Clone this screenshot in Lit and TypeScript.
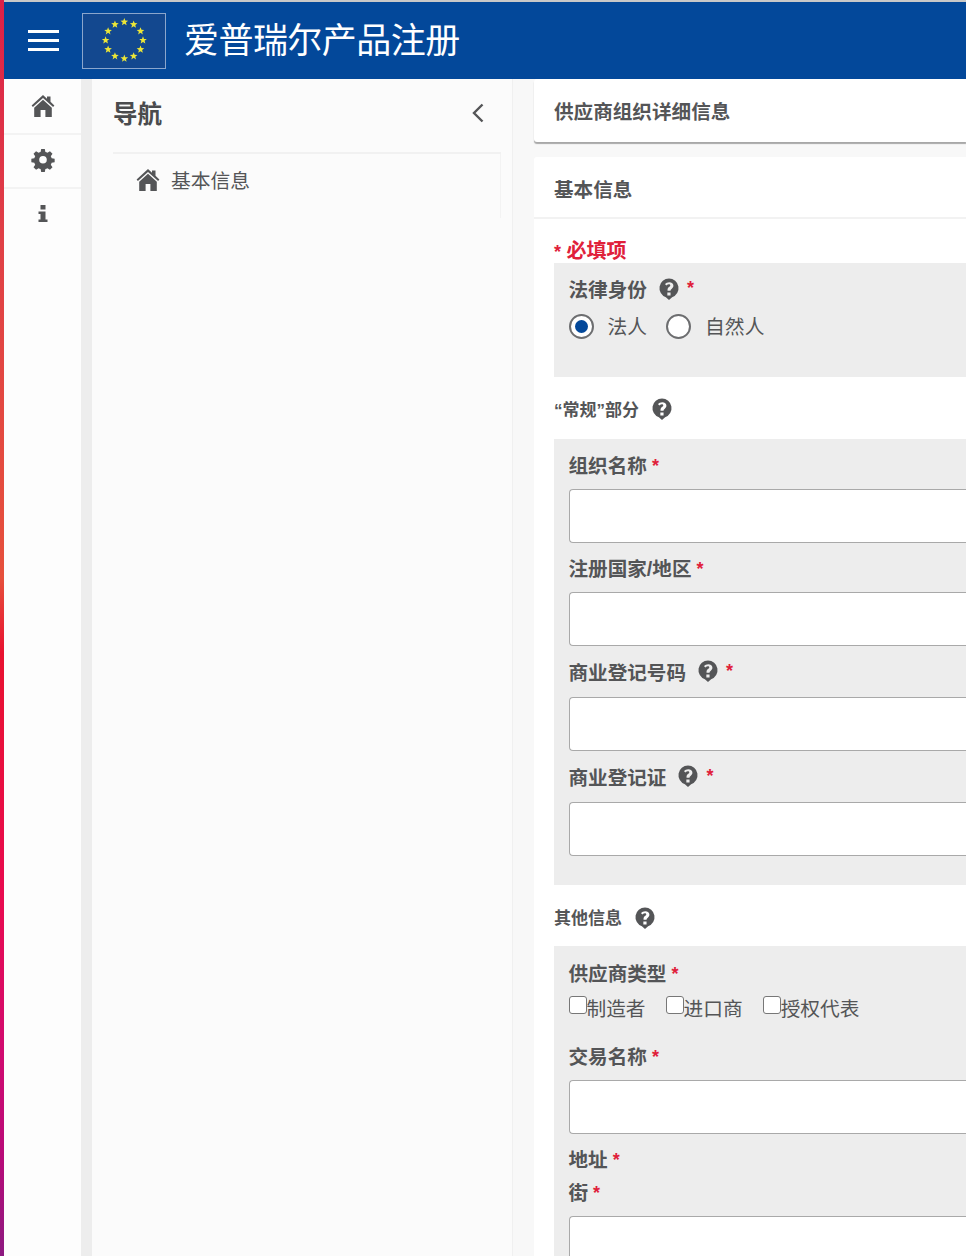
import { LitElement, html, css, svg } from "lit";
import { customElement } from "lit/decorators.js";

const HOME = "M12 1 L0.6 11.4 L1.9 13 L12 3.9 L22.1 13 L23.4 11.4 L19.5 7.8 V2.5 H16 V4.7 Z M12 5.8 L3.2 13.7 V23 H9.6 V16 H14.4 V23 H20.8 V13.7 Z";
const GEAR = "M10.2 1h3.6l.6 3a8 8 0 0 1 2 .85l2.55-1.7 2.55 2.55-1.7 2.55a8 8 0 0 1 .85 2l3 .6v3.3l-3 .6a8 8 0 0 1-.85 2l1.7 2.55-2.55 2.55-2.55-1.7a8 8 0 0 1-2 .85l-.6 3h-3.6l-.6-3a8 8 0 0 1-2-.85l-2.55 1.7-2.55-2.55 1.7-2.55a8 8 0 0 1-.85-2l-3-.6v-3.3l3-.6a8 8 0 0 1 .85-2l-1.7-2.55 2.55-2.55 2.55 1.7a8 8 0 0 1 2-.85ZM12 8a3.8 3.8 0 1 0 0 7.6A3.8 3.8 0 0 0 12 8Z";
const INFO = "M9.5 3h5v4.5h-5ZM7.5 9.5h7V17.5h2V20h-9V17.5h2V12h-2Z";

const homeIcon = () => html`<svg viewBox="0 0 24 24"><path d=${HOME} fill="#545557"></path></svg>`;
const help = html`<svg class="help" viewBox="0 0 24 24"><path fill="#545557" fill-rule="evenodd" d="M12 .5A10.5 10.5 0 0 0 8.6 20.9L12 24l3.4-3.1A10.5 10.5 0 0 0 12 .5Zm-1.8 15.2h3.5v3.3h-3.5Zm3.5-1.7h-3.3v-1.2c0-1.6.9-2.4 1.9-3.2.7-.5 1.1-.9 1.1-1.5 0-.7-.6-1.2-1.5-1.2-1 0-1.9.5-2.6 1.3L7.7 6.8C8.8 5.5 10.3 4.7 12.3 4.7c2.7 0 4.5 1.5 4.5 3.8 0 1.7-1 2.6-2 3.4-.8.6-1.100 1-1.100 1.700Z"></path></svg>`;

function stars() {
  const out = [];
  for (let i = 0; i < 12; i++) {
    const a = (i * Math.PI) / 6;
    const cx = 41.3 + 18.7 * Math.sin(a);
    const cy = 26.3 + 18.3 * -Math.cos(a);
    const pts: string[] = [];
    for (let k = 0; k < 10; k++) {
      const r = k % 2 ? 1.7 : 4;
      const t = (k * Math.PI) / 5;
      pts.push(`${(cx + r * Math.sin(t)).toFixed(2)},${(cy - r * Math.cos(t)).toFixed(2)}`);
    }
    out.push(svg`<polygon points=${pts.join(" ")} fill="#ece637"></polygon>`);
  }
  return out;
}

@customElement("app-root")
export class AppRoot extends LitElement {
  static styles = css`
    :host { display: block; width: 966px; height: 1256px; overflow: hidden; font-family: "Liberation Sans", "Noto Sans CJK SC", sans-serif; color: #545557; background: #fff; }
    .page { display: flex; height: 1256px; overflow: hidden; }
    .stripe { flex: 0 0 4px; background: linear-gradient(180deg, #dc2048 0%, #e04046 19%, #e6503c 46%, #e81230 52%, #e80a50 72%, #d00a70 84%, #b80a78 92%, #8c1a80 100%); }
    .main { flex: 0 0 962px; width: 962px; display: flex; flex-direction: column; min-width: 0; }
    .header { flex: 0 0 79px; box-sizing: border-box; height: 79px; background: #03489a; border-top: 2px solid #c8c8c8; display: flex; align-items: center; }
    .burger { width: 31px; margin-left: 24px; display: flex; flex-direction: column; gap: 6px; }
    .burger i { display: block; height: 3px; background: #fff; }
    .flag { margin-left: 23px; width: 84px; height: 56px; box-sizing: border-box; border: 1px solid #8ba6cc; background: #13488f; display: block; }
    .title { margin-left: 18px; color: #fff; font-size: 35px; line-height: 44px; letter-spacing: -.55px; white-space: nowrap; }
    .body { flex: 1; display: flex; min-height: 0; }
    .rail { flex: 0 0 77px; background: #fdfdfd; display: flex; flex-direction: column; }
    .rail-item { height: 54px; box-sizing: border-box; border-bottom: 2px solid #f3f3f3; display: flex; justify-content: center; align-items: center; padding-bottom: 2px; }
    .rail-item.first { height: 56px; padding-bottom: 0; }
    .rail-item.last { border: 0; padding-bottom: 4px; }
    .rail-item svg { width: 24px; height: 24px; display: block; }
    .gutter { flex: 0 0 11px; background: #ededed; }
    .nav { flex: 0 0 421px; box-sizing: border-box; background: #fbfbfb; padding: 0 11px 0 21px; border-right: 1px solid #f0f0f0; }
    .nav-head { height: 75px; box-sizing: border-box; padding-bottom: 5px; border-bottom: 2px solid #f1f1f1; display: flex; align-items: center; justify-content: space-between; }
    .nav-head h2 { margin: 0 0 2px; font-size: 24.5px; font-weight: 700; color: #4a4b4d; }
    .chev { width: 16px; height: 22px; margin-right: 15px; display: block; }
    .nav-item { height: 64px; box-sizing: border-box; border-right: 1px solid #f3f3f3; display: flex; align-items: center; padding: 0 0 13px 23px; gap: 11px; font-size: 19.8px; }
    .nav-item svg { width: 24px; height: 24px; }
    .content { flex: 1; min-width: 0; background: #f8f8f8; padding-left: 21px; }
    .panel-a { height: 63px; box-sizing: border-box; background: #fff; border-radius: 3px 0 0 3px; box-shadow: 0 2px 1px #a8a8a8; display: flex; align-items: center; padding: 0 0 0 20px; font-size: 19.6px; font-weight: 700; }
    .panel-b { background: #fff; margin-top: 15px; border-radius: 3px 0 0 0; }
    .panel-head { height: 62px; box-sizing: border-box; border-bottom: 2px solid #f2f2f2; display: flex; align-items: center; padding: 2px 0 0 20px; font-size: 19.6px; font-weight: 700; }
    .form { padding: 18px 0 0 20px; }
    .required { color: #e0203a; font-size: 20px; font-weight: 700; line-height: 26px; height: 25px; padding-top: 1px; }
    .required small { font-size: 18px; }
    .star { color: #e0203a; font-weight: 700; }
    .box { background: #ededed; padding: 13px 0 0 14.5px; box-sizing: border-box; }
    .box-a { height: 114px; }
    .box-b { height: 446px; }
    .box-c { height: 400px; padding-top: 14px; }
    .label { display: flex; align-items: center; font-size: 19.6px; font-weight: 700; line-height: 28px; height: 28px; white-space: nowrap; }
    .label.tall { height: 30px; }
    .label .star { margin-left: 5px; font-size: 18px; }
    .help { width: 22px; height: 22px; display: block; flex: none; }
    .label .help { margin-left: 11px; transform: translateY(-1px); }
    .label.tall .help { transform: translateY(-2px); }
    .label .help + .star { margin-left: 7px; transform: translateY(-2px); }
    .radios { display: flex; align-items: center; font-size: 19.8px; height: 32px; margin-top: 6px; }
    .radio { width: 25px; height: 25px; box-sizing: border-box; border-radius: 50%; border: 2px solid #6d6e70; background: #fff; display: flex; align-items: center; justify-content: center; flex: none; }
    .radio i { width: 13px; height: 13px; border-radius: 50%; background: #03489a; display: block; }
    .radios span { margin: 0 19px 2px 14px; }
    .section { display: flex; align-items: center; gap: 12px; font-size: 17px; font-weight: 700; height: 62px; white-space: nowrap; }
    .section .help { transform: translateY(1px); }
    .section.next { height: 61px; padding-top: 2px; box-sizing: border-box; }
    .input { height: 54px; box-sizing: border-box; background: #fff; border: 1px solid #a9a9a9; border-right: 0; border-radius: 4px 0 0 4px; margin-top: 9px; }
    .field { margin-bottom: 12px; }
    .checks { display: flex; font-size: 19.7px; height: 32px; align-items: center; margin-top: 3px; margin-bottom: 20px; }
    .check { display: flex; align-items: center; margin-right: 20px; }
    .check i { width: 18px; height: 18px; box-sizing: border-box; border: 1.5px solid #777; border-radius: 3px; background: #fff; margin-top: -4px; display: block; }
    .addr { margin-top: 1px; }
    .street { margin-top: 5px; }
  `;

  private field(label: unknown, tall = false, extra = "") {
    return html`<div class="field ${extra}"><div class="label ${tall ? "tall" : ""}">${label}</div><div class="input"></div></div>`;
  }

  render() {
    return html`<div class="page">
      <div class="stripe"></div>
      <div class="main">
        <header class="header">
          <div class="burger"><i></i><i></i><i></i></div>
          <svg class="flag" viewBox="0 0 82 54">${stars()}</svg>
          <div class="title">爱普瑞尔产品注册</div>
        </header>
        <div class="body">
          <aside class="rail">
            <div class="rail-item first">${homeIcon()}</div>
            <div class="rail-item"><svg viewBox="0 0 24 24"><path d=${GEAR} fill="#545557" fill-rule="evenodd"></path></svg></div>
            <div class="rail-item last"><svg viewBox="0 0 24 24"><path d=${INFO} fill="#545557"></path></svg></div>
          </aside>
          <div class="gutter"></div>
          <nav class="nav">
            <div class="nav-head"><h2>导航</h2>
              <svg class="chev" viewBox="0 0 16 22"><path d="M12.5 2.5 4 11l8.5 8.5" fill="none" stroke="#545557" stroke-width="2.4"></path></svg>
            </div>
            <div class="nav-item">${homeIcon()}<span>基本信息</span></div>
          </nav>
          <main class="content">
            <div class="panel-a">供应商组织详细信息</div>
            <div class="panel-b">
              <div class="panel-head">基本信息</div>
              <div class="form">
                <div class="required"><small>*</small> 必填项</div>
                <div class="box box-a">
                  <div class="label">法律身份${help}<span class="star">*</span></div>
                  <div class="radios"><div class="radio"><i></i></div><span>法人</span><div class="radio"></div><span>自然人</span></div>
                </div>
                <div class="section">“常规”部分${help}</div>
                <div class="box box-b">
                  ${this.field(html`组织名称<span class="star">*</span>`)}
                  ${this.field(html`注册国家/地区<span class="star">*</span>`)}
                  ${this.field(html`商业登记号码${help}<span class="star">*</span>`, true)}
                  ${this.field(html`商业登记证${help}<span class="star">*</span>`, true)}
                </div>
                <div class="section next">其他信息${help}</div>
                <div class="box box-c">
                  <div class="label">供应商类型<span class="star">*</span></div>
                  <div class="checks">
                    <label class="check"><i></i>制造者</label>
                    <label class="check"><i></i>进口商</label>
                    <label class="check"><i></i>授权代表</label>
                  </div>
                  ${this.field(html`交易名称<span class="star">*</span>`)}
                  <div class="label addr">地址<span class="star">*</span></div>
                  ${this.field(html`街<span class="star">*</span>`, false, "street")}
                </div>
              </div>
            </div>
          </main>
        </div>
      </div>
    </div>`;
  }
}
